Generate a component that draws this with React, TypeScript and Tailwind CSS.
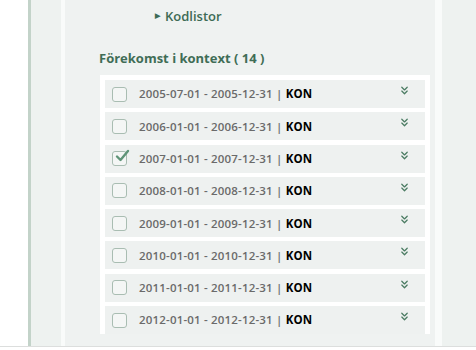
import { ChevronsDown } from "lucide-react";

const rows = [
  { from: "2005-07-01", to: "2005-12-31", checked: false },
  { from: "2006-01-01", to: "2006-12-31", checked: false },
  { from: "2007-01-01", to: "2007-12-31", checked: true },
  { from: "2008-01-01", to: "2008-12-31", checked: false },
  { from: "2009-01-01", to: "2009-12-31", checked: false },
  { from: "2010-01-01", to: "2010-12-31", checked: false },
  { from: "2011-01-01", to: "2011-12-31", checked: false },
  { from: "2012-01-01", to: "2012-12-31", checked: false },
];

function Checkbox({ checked }: { checked: boolean }) {
  return (
    <span className="relative w-[15px] h-[15px] shrink-0 rounded-[3px] border-[1.5px] border-[#a9bdb2] bg-[#f4f6f5]">
      {checked && (
        <svg
          viewBox="0 0 16 16"
          className="absolute -top-[4px] left-[1px] w-[16px] h-[16px]"
          fill="none"
          stroke="#5f9478"
          strokeWidth="2.4"
          strokeLinecap="round"
          strokeLinejoin="round"
        >
          <path d="M3 8.5 L6.5 12 L14 3" />
        </svg>
      )}
    </span>
  );
}

export default function App() {
  return (
    <div
      className="w-[476px] h-[350px] bg-white overflow-hidden"
      style={{ fontFamily: '"Open Sans", "Liberation Sans", sans-serif' }}
    >
      <div className="h-[347px] flex border-b border-[#dcdedd]">
        <div className="ml-[28px] flex-1 flex border-l-[3px] border-[#c3d3c9] bg-[#eef2f0] pl-[30px]">
          {/* inner panel */}
          <div className="w-[381px] border-l-[4px] border-r-[7px] border-[#f9fbfa] bg-[#eff2f1] pl-[35px] pr-[5px]">
            <div className="pl-[55px] pt-[7px] flex items-center gap-[5px] text-[13px] font-semibold text-[#3d6b55] leading-[18px]">
              <span className="text-[7px]">▶</span>
              <span>Kodlistor</span>
            </div>

            <div className="mt-[24px] text-[13px] font-bold text-[#3f6d56] leading-[18px] -ml-[1px]">
              Förekomst i kontext ( 14 )
            </div>

            <div className="mt-[8px] bg-white px-[5px] pt-[5px] flex flex-col gap-[4.3px]">
              {rows.map((r) => (
                <div
                  key={r.from}
                  className="h-[28px] shrink-0 bg-[#eef1f0] flex items-center pl-[7px] pr-[14px]"
                >
                  <Checkbox checked={r.checked} />
                  <span className="ml-[12px] text-[11.5px] tracking-[0.18px] font-semibold text-[#6a6a6a] whitespace-nowrap">
                    {r.from} - {r.to} |{" "}
                    <span className="font-bold text-black">KON</span>
                  </span>
                  <span className="flex-1" />
                  <ChevronsDown className="w-[13px] h-[13px] -mt-[7px] text-[#4b7c63]" strokeWidth={2.3} />
                </div>
              ))}
            </div>
          </div>
        </div>
      </div>
    </div>
  );
}
